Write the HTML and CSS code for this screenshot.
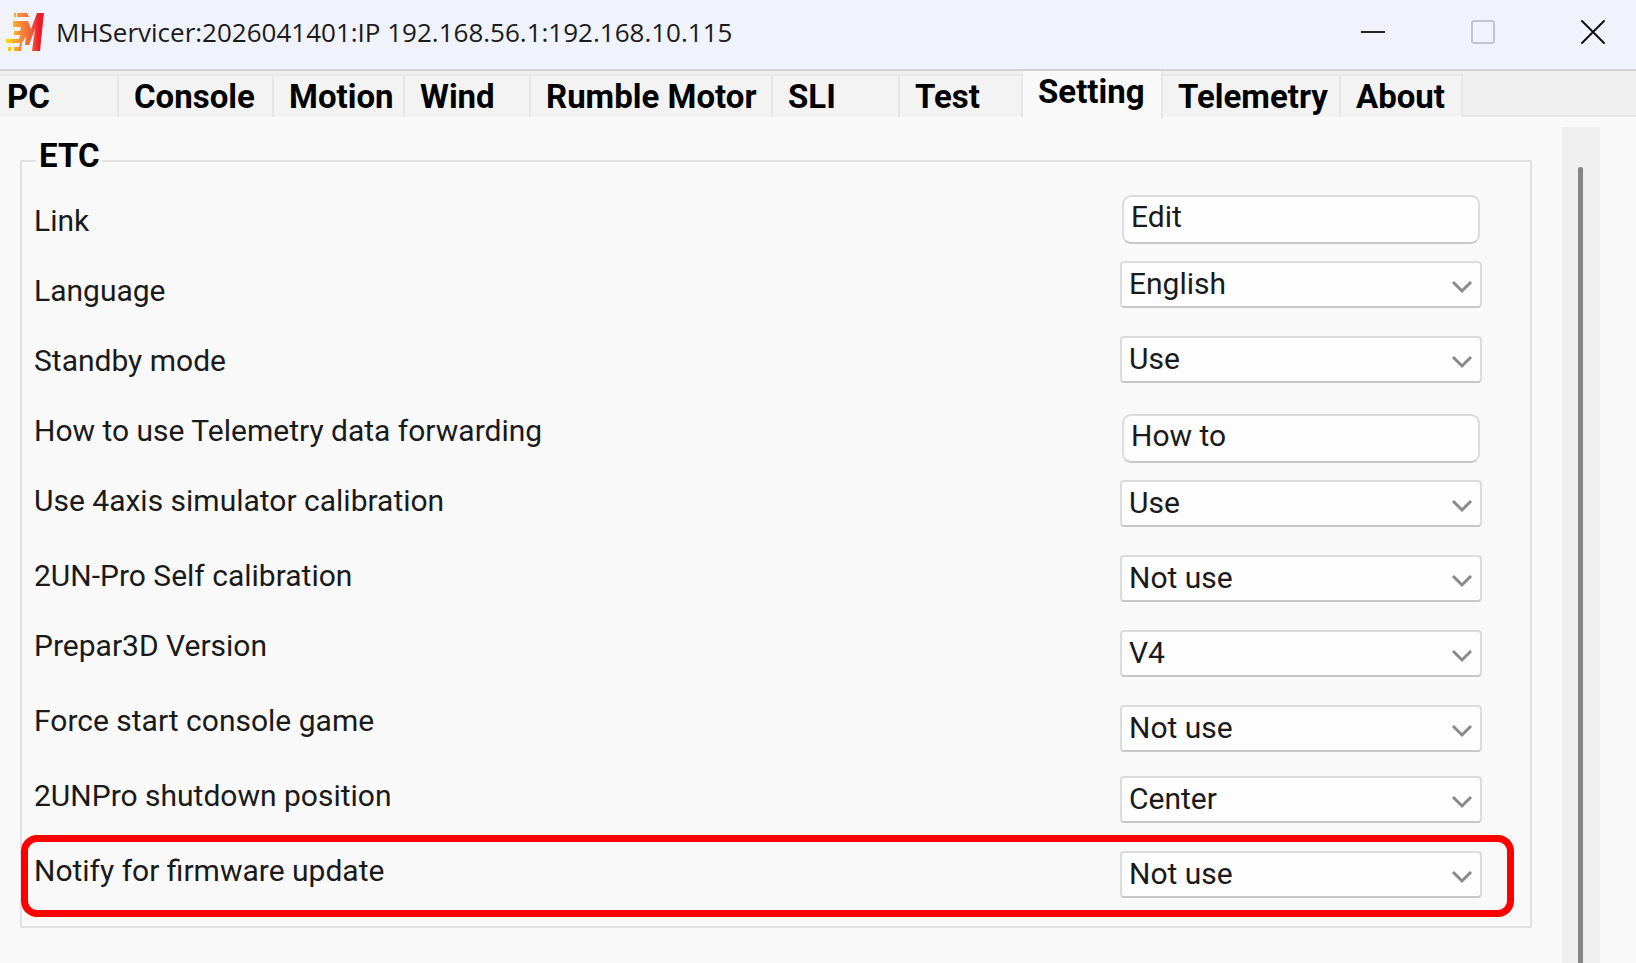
FILE: index.html
```html
<!DOCTYPE html>
<html lang="en">
<head>
  <meta charset="UTF-8">
  <title>MHServicer</title>
  <link rel="stylesheet" href="styles.css">
</head>
<body>
  <header class="titlebar">
    <svg class="logo" width="40" height="40" viewBox="0 0 40 40">
      <defs>
        <linearGradient id="flame" gradientUnits="userSpaceOnUse" x1="0" y1="0" x2="40" y2="0">
          <stop offset="0" stop-color="#ffe000"/>
          <stop offset=".4" stop-color="#f58a3c"/>
          <stop offset=".65" stop-color="#f0603a"/>
          <stop offset=".85" stop-color="#ec1c2c"/>
        </linearGradient>
      </defs>
      <path fill="url(#flame)" d="M12 1h10l2 4H12zM9 1h2v4H9zM8 9h15l3 8 6-16h7l-4 38h-8l3-22-6 16h-4l1-9-4 7-1 8H9v-4h5l1-4H1v-4h13l1-4H9v-4h6l1-4H8zM3 35h3v4H3z"/>
    </svg>
    <h1 class="title">MHServicer:2026041401:IP 192.168.56.1:192.168.10.115</h1>
    <div class="window_btns">
      <button type="button" aria-label="Minimize">
        <svg width="26" height="26" viewBox="0 0 26 26"><path d="M1 13h24" stroke="#222" stroke-width="2"/></svg>
      </button>
      <button type="button" aria-label="Maximize" disabled>
        <svg width="26" height="26" viewBox="0 0 26 26"><rect x="2" y="2" width="22" height="22" rx="2" fill="none" stroke="#c3c5ca" stroke-width="2"/></svg>
      </button>
      <button type="button" aria-label="Close">
        <svg width="26" height="26" viewBox="0 0 26 26"><path d="M2 2l22 22M24 2L2 24" stroke="#111" stroke-width="2" stroke-linecap="round"/></svg>
      </button>
    </div>
  </header>

  <nav class="tabs">
    <a href="#" class="tab">PC</a>
    <a href="#" class="tab">Console</a>
    <a href="#" class="tab">Motion</a>
    <a href="#" class="tab">Wind</a>
    <a href="#" class="tab">Rumble Motor</a>
    <a href="#" class="tab">SLI</a>
    <a href="#" class="tab">Test</a>
    <a href="#" class="tab active">Setting</a>
    <a href="#" class="tab">Telemetry</a>
    <a href="#" class="tab">About</a>
  </nav>

  <main class="page">
    <fieldset class="group">
      <legend>ETC</legend>
      <div class="settings">
        <div class="labels">
          <label for="link">Link</label>
          <label for="language">Language</label>
          <label for="standby">Standby mode</label>
          <label for="howto">How to use Telemetry data forwarding</label>
          <label for="axis" class="tall">Use 4axis simulator calibration</label>
          <label for="self">2UN-Pro Self calibration</label>
          <label for="prepar" class="tall">Prepar3D Version</label>
          <label for="force" class="tall">Force start console game</label>
          <label for="shutdown" class="tall">2UNPro shutdown position</label>
          <label for="notify">Notify for firmware update</label>
        </div>
        <div class="controls">
          <button type="button" id="link">Edit</button>
          <select id="language"><option>English</option></select>
          <select id="standby" class="loose"><option>Use</option><option>Not use</option></select>
          <button type="button" id="howto">How to</button>
          <select id="axis"><option>Use</option><option>Not use</option></select>
          <select id="self"><option>Not use</option><option>Use</option></select>
          <select id="prepar"><option>V4</option></select>
          <select id="force" class="close"><option>Not use</option><option>Use</option></select>
          <select id="shutdown"><option>Center</option></select>
          <select id="notify"><option>Not use</option><option>Use</option></select>
        </div>
      </div>
      <div class="highlight"></div>
    </fieldset>
    <div class="scrollbar">
      <div class="thumb"></div>
    </div>
  </main>
</body>
</html>
```
FILE: styles.css
```css
*{
  box-sizing: border-box;
}
body{
  margin: 0;
  min-height: 100vh;
  display: flex;
  flex-direction: column;
  background: #f9f9f9;
  color: #1a1a1a;
  font-family: Roboto, "Liberation Sans", sans-serif;
  font-size: 30px;
}
button, select{
  font: inherit;
  color: inherit;
}
.titlebar{
  display: flex;
  align-items: center;
  height: 71px;
  padding: 0 0 5px 5px;
  background: #f0f3fb;
  border-bottom: 2px solid #d0d1d4;
}
.title{
  flex: 1;
  margin: 0 0 0 11px;
  font: 400 26px "Open Sans", "Noto Sans", sans-serif;
}
.window_btns{
  display: flex;
  gap: 24px;
}
.window_btns button{
  display: flex;
  align-items: center;
  justify-content: center;
  width: 86px;
  height: 62px;
  padding: 0;
  border: none;
  background: none;
}
.tabs{
  display: grid;
  grid-template-columns: 119px 155px 131px 126px 242px 127px 123px 140px 178px 122px;
  height: 46px;
  background: #efefef;
  border-bottom: 2px solid #e6e6e6;
}
.tab{
  margin-top: 3px;
  padding-left: 15px;
  border-top: 2px solid #e8e8e8;
  border-right: 2px solid #e6e6e6;
  background: #f3f3f3;
  color: #000;
  font-size: 33px;
  font-weight: 700;
  line-height: 41px;
  text-decoration: none;
  white-space: nowrap;
}
.tab:first-child{
  padding-left: 7px;
}
.tab.active{
  margin: 0 0 -2px;
  border-top: none;
  background: #f9f9f9;
}
.page{
  flex: 1;
  display: flex;
  padding: 10px 36px 0 20px;
}
.group{
  flex: 1;
  position: relative;
  align-self: flex-start;
  margin: 9px 30px 0 0;
  padding: 0 48px 0 12px;
  border: 2px solid #e2e2e2;
}
.group legend{
  margin-left: 2px;
  padding: 0 3px 10px;
  color: #000;
  font-size: 33px;
  font-weight: 700;
  line-height: 40px;
}
.settings{
  display: flex;
  justify-content: space-between;
}
.labels, .controls{
  display: flex;
  flex-direction: column;
}
.labels{
  padding-top: 15px;
}
.labels label{
  height: 70px;
  line-height: 40px;
}
.labels .tall{
  height: 75px;
}
.controls{
  width: 362px;
  padding-top: 9px;
}
.controls button{
  height: 49px;
  margin: 0 2px 17px;
  padding: 0 7px 7px;
  border: 2px solid #dcdcdc;
  border-bottom-color: #c8c8c8;
  border-radius: 9px;
  background: #fdfdfd;
  text-align: left;
}
.controls select{
  appearance: none;
  height: 47px;
  margin-bottom: 28px;
  padding: 0 40px 2px 7px;
  border: 2px solid #dcdcdc;
  border-bottom-color: #c8c8c8;
  border-radius: 4px;
  background: #fdfdfd url("data:image/svg+xml,%3Csvg xmlns='http://www.w3.org/2000/svg' width='22' height='14'%3E%3Cpath d='M2 2l9 9 9-9' fill='none' stroke='%238a8a8a' stroke-width='3'/%3E%3C/svg%3E") no-repeat right 7px top 17px;
}
.controls .loose{
  margin-bottom: 31px;
}
.controls .close{
  margin-bottom: 24px;
}
.highlight{
  position: absolute;
  left: -1px;
  right: 16px;
  bottom: 9px;
  height: 82px;
  border: 7px solid #f00;
  border-radius: 16px;
  pointer-events: none;
}
.scrollbar{
  width: 38px;
  padding-top: 40px;
  background: #efefef;
}
.thumb{
  width: 5px;
  height: 100%;
  margin-left: 16px;
  border-radius: 2px 2px 0 0;
  background: #868686;
}
```
